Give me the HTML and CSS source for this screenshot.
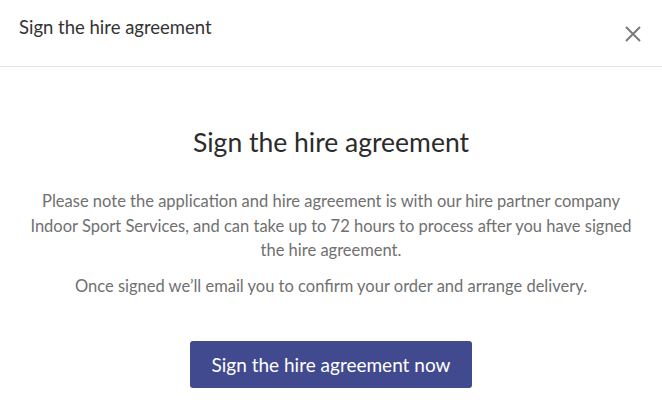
FILE: index.html
```html
<!DOCTYPE html>
<html lang="en">

<head>
    <meta charset="UTF-8">
    <meta name="viewport" content="width=device-width, initial-scale=1.0">
    <title>Sign the hire agreement</title>
    <link rel="stylesheet" href="styles.css">
</head>

<body>

    <div id="modal">
        <div id="modalHeader">
            <span id="modalTitle">Sign the hire agreement</span>
            <button id="closeButton" aria-label="Close">
                <svg width="18" height="18" viewBox="0 0 18 18">
                    <path d="M2 2 L16 16 M16 2 L2 16" stroke="#7a7a7a" stroke-width="2" fill="none" />
                </svg>
            </button>
        </div>
        <div id="modalBody">
            <h2>Sign the hire agreement</h2>
            <p>Please note the application and hire agreement is with our hire partner company Indoor Sport Services, and can take up to 72 hours to process after you have signed the hire agreement.</p>
            <p>Once signed we’ll email you to confirm your order and arrange delivery.</p>
            <button id="signButton">Sign the hire agreement now</button>
        </div>
    </div>

</body>

</html>
```

FILE: styles.css
```css
body {
    margin: 0;
    font-family: Lato, "Open Sans", sans-serif;
    background: #fff;
    color: #333;
}

#modalHeader {
    height: 67px;
    border-bottom: 1px solid #e3e3e3;
    display: flex;
    align-items: center;
    justify-content: space-between;
    padding: 0 20px 0 19px;
    box-sizing: border-box;
}

#modalTitle {
    font-size: 18.5px;
    font-weight: 400;
    color: #333;
    margin-top: -12px;
}

#closeButton {
    background: none;
    border: none;
    padding: 0;
    margin-top: 2px;
    display: flex;
}

#modalBody {
    padding: 0 30px;
    text-align: center;
}

h2 {
    margin: 58px 0 30px;
    font-size: 26.5px;
    font-weight: 400;
    color: #2b2b2b;
    line-height: 34px;
}

p {
    margin: 0 0 11px;
    font-size: 16.5px;
    line-height: 24.5px;
    color: #707070;
}

#signButton {
    margin-top: 32px;
    width: 282px;
    height: 47px;
    border: none;
    border-radius: 3px;
    background: #414a8e;
    color: #fff;
    font-family: inherit;
    font-size: 19px;
}
```
